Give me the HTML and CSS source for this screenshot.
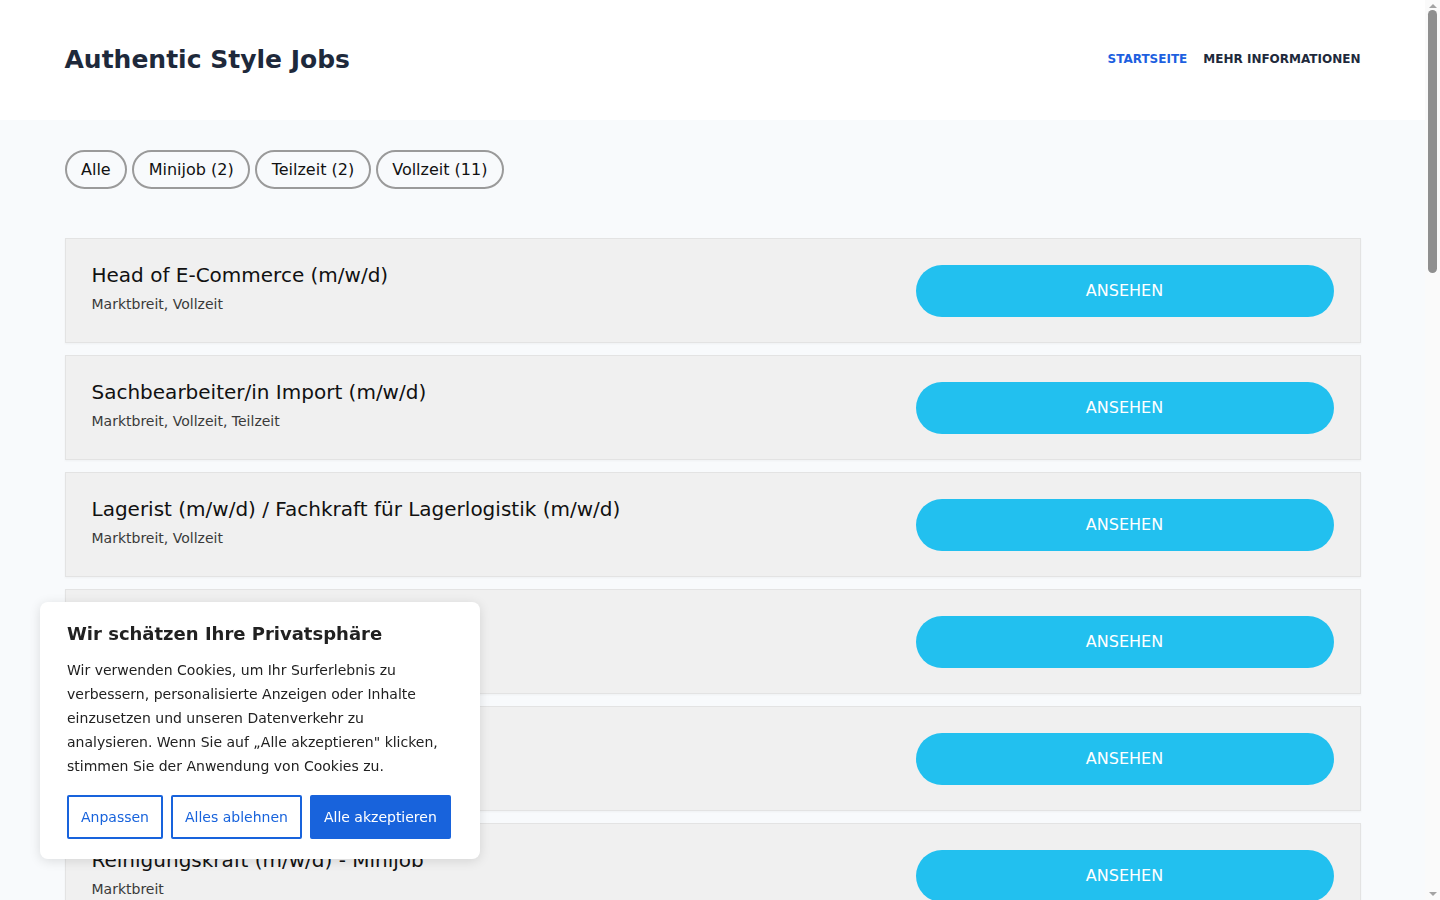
FILE: index.html
```html
<!DOCTYPE html>
<html lang="de">
<head>
    <meta charset="UTF-8">
    <meta name="viewport" content="width=device-width, initial-scale=1.0">
    <title>Authentic Style Jobs</title>
    <link rel="stylesheet" href="styles.css">
</head>
<body>
    <header class="site-header">
        <div class="container header-inner">
            <a href="#" class="brand">Authentic Style Jobs</a>
            <nav class="main-nav">
                <a href="#" class="active">Startseite</a>
                <a href="#">Mehr Informationen</a>
            </nav>
        </div>
    </header>

    <main class="container">
        <div class="filters">
            <button class="filter">Alle</button>
            <button class="filter">Minijob (2)</button>
            <button class="filter">Teilzeit (2)</button>
            <button class="filter">Vollzeit (11)</button>
        </div>

        <ul class="job-list">
            <li class="job">
                <div class="job-info">
                    <h3>Head of E-Commerce (m/w/d)</h3>
                    <p>Marktbreit, Vollzeit</p>
                </div>
                <a href="#" class="job-button">Ansehen</a>
            </li>
            <li class="job">
                <div class="job-info">
                    <h3>Sachbearbeiter/in Import (m/w/d)</h3>
                    <p>Marktbreit, Vollzeit, Teilzeit</p>
                </div>
                <a href="#" class="job-button">Ansehen</a>
            </li>
            <li class="job">
                <div class="job-info">
                    <h3>Lagerist (m/w/d) / Fachkraft für Lagerlogistik (m/w/d)</h3>
                    <p>Marktbreit, Vollzeit</p>
                </div>
                <a href="#" class="job-button">Ansehen</a>
            </li>
            <li class="job">
                <div class="job-info">
                    <h3>Kaufmann/-frau (m/w/d)</h3>
                    <p>Marktbreit, Vollzeit</p>
                </div>
                <a href="#" class="job-button">Ansehen</a>
            </li>
            <li class="job">
                <div class="job-info">
                    <h3>Kundenservice (m/w/d)</h3>
                    <p>Marktbreit, Teilzeit</p>
                </div>
                <a href="#" class="job-button">Ansehen</a>
            </li>
            <li class="job">
                <div class="job-info">
                    <h3>Reinigungskraft (m/w/d) - Minijob</h3>
                    <p>Marktbreit</p>
                </div>
                <a href="#" class="job-button">Ansehen</a>
            </li>
            <li class="job">
                <div class="job-info">
                    <h3>Aushilfe Versand (m/w/d) - Minijob</h3>
                    <p>Marktbreit</p>
                </div>
                <a href="#" class="job-button">Ansehen</a>
            </li>
            <li class="job">
                <div class="job-info">
                    <h3>Online Marketing Manager (m/w/d)</h3>
                    <p>Marktbreit, Vollzeit</p>
                </div>
                <a href="#" class="job-button">Ansehen</a>
            </li>
            <li class="job">
                <div class="job-info">
                    <h3>Produktmanager Textil (m/w/d)</h3>
                    <p>Marktbreit, Vollzeit</p>
                </div>
                <a href="#" class="job-button">Ansehen</a>
            </li>
            <li class="job">
                <div class="job-info">
                    <h3>Einkäufer/in (m/w/d)</h3>
                    <p>Marktbreit, Vollzeit</p>
                </div>
                <a href="#" class="job-button">Ansehen</a>
            </li>
            <li class="job">
                <div class="job-info">
                    <h3>Buchhalter/in (m/w/d)</h3>
                    <p>Marktbreit, Vollzeit</p>
                </div>
                <a href="#" class="job-button">Ansehen</a>
            </li>
            <li class="job">
                <div class="job-info">
                    <h3>Grafikdesigner/in (m/w/d)</h3>
                    <p>Marktbreit, Vollzeit</p>
                </div>
                <a href="#" class="job-button">Ansehen</a>
            </li>
            <li class="job">
                <div class="job-info">
                    <h3>Fachinformatiker/in Systemintegration (m/w/d)</h3>
                    <p>Marktbreit, Vollzeit</p>
                </div>
                <a href="#" class="job-button">Ansehen</a>
            </li>
            <li class="job">
                <div class="job-info">
                    <h3>Auszubildende/r Kaufmann/-frau im E-Commerce (m/w/d)</h3>
                    <p>Marktbreit, Vollzeit</p>
                </div>
                <a href="#" class="job-button">Ansehen</a>
            </li>
        </ul>
    </main>

    <footer class="site-footer">
        <div class="container footer-inner">
            <div class="footer-col">
                <h4>Authentic Style</h4>
                <p>Marktbreit</p>
            </div>
            <div class="footer-col">
                <h4>Links</h4>
                <a href="#">Impressum</a>
                <a href="#">Datenschutz</a>
            </div>
        </div>
    </footer>

    <div class="cookie-banner">
        <h2>Wir schätzen Ihre Privatsphäre</h2>
        <p>Wir verwenden Cookies, um Ihr Surferlebnis zu verbessern, personalisierte Anzeigen oder Inhalte einzusetzen und unseren Datenverkehr zu analysieren. Wenn Sie auf „Alle akzeptieren" klicken, stimmen Sie der Anwendung von Cookies zu.</p>
        <div class="cookie-actions">
            <button class="cookie-btn">Anpassen</button>
            <button class="cookie-btn">Alles ablehnen</button>
            <button class="cookie-btn primary">Alle akzeptieren</button>
        </div>
    </div>

    <div class="scrollbar" aria-hidden="true">
        <span class="scroll-arrow up"></span>
        <span class="scroll-thumb"></span>
        <span class="scroll-arrow down"></span>
    </div>
</body>
</html>
```

FILE: styles.css
```css
* {
    margin: 0;
    padding: 0;
    box-sizing: border-box;
}

body {
    font-family: 'DejaVu Sans', Verdana, sans-serif;
    background: #f8fafc;
    color: #111;
    padding-right: 15px;
}

a {
    text-decoration: none;
}

.container {
    max-width: 1296px;
    margin: 0 auto;
}

/* header */

.site-header {
    background: #fff;
}

.header-inner {
    height: 120px;
    padding-bottom: 2px;
    display: flex;
    align-items: center;
    justify-content: space-between;
}

.brand {
    font-size: 25px;
    font-weight: bold;
    color: #1e293b;
}

.main-nav {
    display: flex;
    gap: 16px;
}

.main-nav a {
    font-size: 12px;
    font-weight: bold;
    text-transform: uppercase;
    color: #1e293b;
}

.main-nav a.active {
    color: #1d5fe0;
}

/* filters */

.filters {
    display: flex;
    gap: 5px;
    padding: 30px 0 49px;
}

.filter {
    font-family: inherit;
    font-size: 16px;
    line-height: 19px;
    color: #111;
    background: transparent;
    border: 2px solid #9a9a9a;
    border-radius: 999px;
    padding: 8px 14.5px;
    cursor: pointer;
}

/* job list */

.job-list {
    list-style: none;
    display: flex;
    flex-direction: column;
    gap: 12px;
    padding-bottom: 60px;
}

.job {
    display: flex;
    align-items: flex-start;
    justify-content: space-between;
    background: #f0f0f0;
    border: 1px solid #e3e3e3;
    box-shadow: 0 1px 2px rgba(0, 0, 0, 0.04);
    padding: 26px 26px 25px;
}

.job-info {
    margin-top: -1px;
}

.job-info h3 {
    font-size: 20px;
    line-height: 23px;
    font-weight: normal;
    color: #111;
    margin-bottom: 9px;
}

.job-info p {
    font-size: 14px;
    line-height: 16px;
    color: #3a3a3a;
}

.job-button {
    width: 418px;
    height: 52px;
    padding-bottom: 1px;
    display: flex;
    align-items: center;
    justify-content: center;
    background: #22c0ef;
    color: #fff;
    font-size: 16px;
    text-transform: uppercase;
    border-radius: 26px;
}

/* footer */

.site-footer {
    background: #fff;
    margin-top: 500px;
    padding: 60px 0 240px;
}

.footer-inner {
    display: flex;
    gap: 120px;
}

.footer-col h4 {
    font-size: 16px;
    margin-bottom: 12px;
    color: #1e293b;
}

.footer-col p,
.footer-col a {
    display: block;
    font-size: 14px;
    color: #444;
    margin-bottom: 6px;
}

/* cookie banner */

.cookie-banner {
    position: fixed;
    left: 40px;
    bottom: 41px;
    width: 440px;
    background: #fff;
    border-radius: 8px;
    box-shadow: 0 2px 12px rgba(0, 0, 0, 0.12);
    padding: 21px 27px 20px;
}

.cookie-banner h2 {
    font-size: 18px;
    font-weight: bold;
    color: #212121;
    margin-bottom: 14px;
}

.cookie-banner p {
    font-size: 14px;
    line-height: 24px;
    color: #212121;
    margin-bottom: 17px;
}

.cookie-actions {
    display: flex;
    gap: 8px;
}

.cookie-btn {
    font-family: inherit;
    font-size: 14px;
    white-space: nowrap;
    padding: 12px;
    border: 2px solid #1863dc;
    border-radius: 2px;
    background: #fff;
    color: #1863dc;
    cursor: pointer;
}

.cookie-btn.primary {
    background: #1863dc;
    color: #fff;
}

/* window scrollbar */

.scrollbar {
    position: fixed;
    top: 0;
    right: 0;
    width: 15px;
    height: 100vh;
    background: #fafafa;
    display: flex;
    flex-direction: column;
    align-items: center;
}

.scroll-arrow {
    width: 0;
    height: 0;
    border-left: 4px solid transparent;
    border-right: 4px solid transparent;
}

.scroll-arrow.up {
    margin-top: 4px;
    border-bottom: 4px solid #a3a3a3;
}

.scroll-arrow.down {
    margin-top: auto;
    margin-bottom: 4px;
    border-top: 4px solid #a3a3a3;
}

.scroll-thumb {
    width: 9px;
    height: 263px;
    margin-top: 2px;
    background: #8f8f8f;
    border-radius: 5px;
}
```
